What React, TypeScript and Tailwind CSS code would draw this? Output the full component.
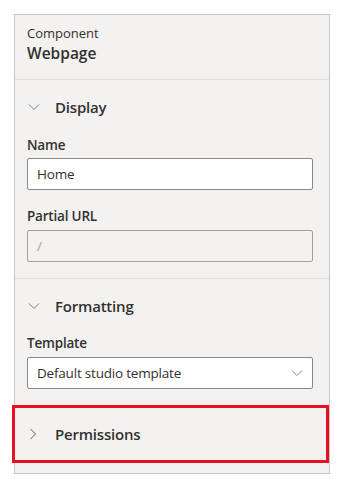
import * as React from 'react'

const font = { fontFamily: '"Open Sans", "Noto Sans", sans-serif' }

function Chevron({ dir, color }: { dir: 'down' | 'right'; color: string }) {
    if (dir === 'right') {
        return (
            <svg width="10" height="12" viewBox="0 0 10 12" className="shrink-0">
                <path d="M2.5 1 L7.5 6 L2.5 11" fill="none" stroke={color} strokeWidth="1" />
            </svg>
        )
    }
    return (
        <svg width="12" height="8" viewBox="0 0 12 8" className="shrink-0">
            <path d="M1 1.5 L6 6.5 L11 1.5" fill="none" stroke={color} strokeWidth="1" />
        </svg>
    )
}

function SectionHeader({ title, open, color }: { title: string; open: boolean; color: string }) {
    return (
        <div className="flex h-[54px] items-center pl-[13px]">
            <div className="flex w-[27px] justify-start">
                <Chevron dir={open ? 'down' : 'right'} color={color} />
            </div>
            <span className="text-[15px] font-semibold leading-[22px] tracking-[-0.2px] text-[#323130]">{title}</span>
        </div>
    )
}

function Label({ children }: { children: React.ReactNode }) {
    return (
        <div className="h-5 text-[13.5px] font-semibold leading-5 tracking-[-0.2px] text-[#323130]">{children}</div>
    )
}

export default function App() {
    return (
        <div className="min-h-[488px] bg-white pl-[14px] pt-[14px]" style={font}>
            <div className="flex h-[460px] w-[316px] flex-col border border-[#c8c6c4] bg-[#f3f2f1]">
                <div className="h-[65px] border-b border-[#e1dfdd] pl-3 pt-[9px]">
                    <div className="text-[13px] leading-[18px] text-[#323130]">Component</div>
                    <div className="mt-[1px] text-[15.5px] font-semibold leading-5 text-[#323130]">Webpage</div>
                </div>

                <div className="border-b border-[#e1dfdd] pb-4">
                    <SectionHeader title="Display" open color="#5f86b8" />
                    <div className="pl-3">
                        <div className="mt-[1px]">
                            <Label>Name</Label>
                        </div>
                        <div className="mt-[3px] flex h-[32px] w-[286px] items-center rounded-[2px] border border-[#8a8886] bg-white px-[9px] text-[13.5px] tracking-[-0.2px] text-[#323130]">
                            Home
                        </div>
                        <div className="mt-4">
                            <Label>Partial URL</Label>
                        </div>
                        <div className="mt-1 flex h-[32px] w-[286px] items-center rounded-[2px] border border-[#a19f9d] bg-[#f3f2f1] px-[9px] text-[13.5px] text-[#a19f9d]">
                            /
                        </div>
                    </div>
                </div>

                <div>
                    <SectionHeader title="Formatting" open color="#8a7d72" />
                    <div className="pl-3">
                        <Label>Template</Label>
                        <div className="mt-1 flex h-[32px] w-[286px] items-center justify-between rounded-[2px] border border-[#8a8886] bg-white pl-[9px] pr-[9px] text-[13.5px] tracking-[-0.2px] text-[#323130]">
                            <span>Default studio template</span>
                            <Chevron dir="down" color="#6a8fbf" />
                        </div>
                    </div>
                    <div className="-ml-[3px] mt-4 flex h-[58px] w-[317px] items-center border-[3px] border-[#e81123] pl-[13px]">
                        <div className="flex w-[27px] justify-start">
                            <Chevron dir="right" color="#605e5c" />
                        </div>
                        <span className="text-[15px] font-semibold leading-[22px] tracking-[-0.2px] text-[#323130]">
                            Permissions
                        </span>
                    </div>
                </div>
            </div>
        </div>
    )
}
